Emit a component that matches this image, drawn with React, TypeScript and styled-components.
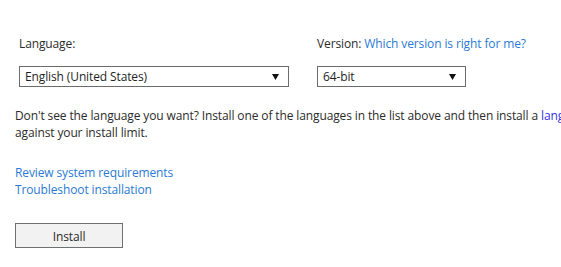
import styled, { createGlobalStyle } from 'styled-components';

const GlobalStyle = createGlobalStyle`
  body {
    margin: 0;
    overflow: hidden;
    background: #ffffff;
    font-family: 'Open Sans', 'Liberation Sans', sans-serif;
    font-size: 12px;
    letter-spacing: -0.12px;
    color: #2b2b2b;
  }
`;

const Page = styled.div`
  padding: 35px 0 0 15px;
  display: flex;
  flex-direction: column;
`;

const Fields = styled.div`
  display: flex;
  gap: 28px;
  padding-left: 4px;
`;

const Field = styled.div`
  display: flex;
  flex-direction: column;
  gap: 14px;
`;

const Label = styled.div`
  line-height: 17px;
  white-space: nowrap;
`;

const Link = styled.a<{ $accent?: boolean }>`
  color: ${(p) => (p.$accent ? '#3333dd' : '#2a7ad5')};
  text-decoration: none;
  cursor: pointer;
`;

const Select = styled.div<{ $width: number }>`
  box-sizing: border-box;
  width: ${(p) => p.$width}px;
  height: 21px;
  border: 1px solid #6b6b6b;
  display: flex;
  align-items: center;
  justify-content: space-between;
  padding: 0 9px 0 5px;
  color: #1f1f1f;
`;

const Arrow = styled.svg`
  width: 7px;
  height: 7px;
  fill: #111;
`;

const Note = styled.p`
  margin: 20px 0 0;
  line-height: 17px;
  white-space: nowrap;
`;

const Links = styled.div`
  margin-top: 23px;
  display: flex;
  flex-direction: column;
  line-height: 17px;
`;

const Button = styled.button`
  margin-top: 25px;
  box-sizing: border-box;
  width: 108px;
  height: 25px;
  border: 1px solid #707070;
  background: #f2f2f2;
  font-family: inherit;
  font-size: 12px;
  letter-spacing: inherit;
  color: #2b2b2b;
  padding: 1px 0 0;
`;

function Dropdown({ value, width }: { value: string; width: number }) {
  return (
    <Select $width={width}>
      <span>{value}</span>
      <Arrow viewBox="0 0 7 7">
        <polygon points="0,1 7,1 3.5,7" />
      </Arrow>
    </Select>
  );
}

export default function App() {
  return (
    <>
      <GlobalStyle />
      <Page>
        <Fields>
          <Field>
            <Label>Language:</Label>
            <Dropdown value="English (United States)" width={270} />
          </Field>
          <Field>
            <Label>
              Version: <Link>Which version is right for me?</Link>
            </Label>
            <Dropdown value="64-bit" width={149} />
          </Field>
        </Fields>
        <Note>
          Don't see the language you want? Install one of the languages in the list above and then install a{' '}
          <Link $accent>language accessory pack</Link>. Language accessory packs don't count
          <br />
          against your install limit.
        </Note>
        <Links>
          <Link>Review system requirements</Link>
          <Link>Troubleshoot installation</Link>
        </Links>
        <div>
          <Button>Install</Button>
        </div>
      </Page>
    </>
  );
}
